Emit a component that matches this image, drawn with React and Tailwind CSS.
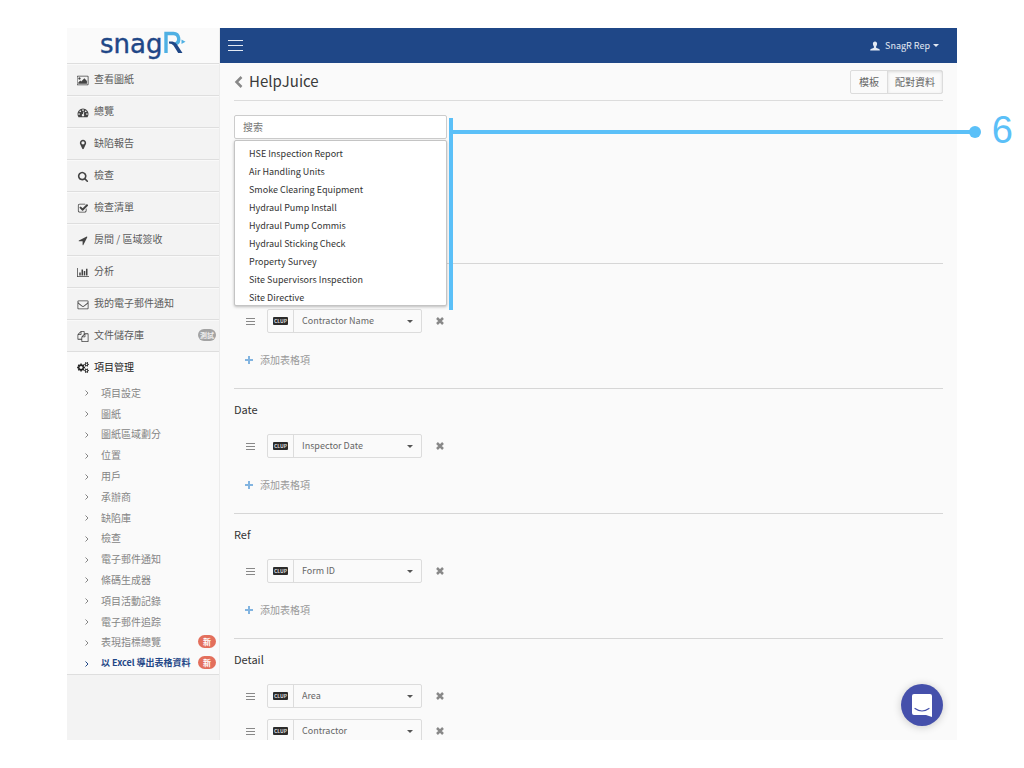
import { useState } from "react";

const ICONS = {
  picture: {
    box: "0 0 1920 1792",
    d: "M576 576q0 80-56 136t-136 56-136-56-56-136 56-136 136-56 136 56 56 136zm1024 384v448h-1408v-192l320-320 160 160 512-512zm96-704h-1600q-13 0-22.5 9.5t-9.5 22.5v1216q0 13 9.5 22.5t22.5 9.5h1600q13 0 22.5-9.5t9.5-22.5v-1216q0-13-9.5-22.5t-22.5-9.5zm160 32v1216q0 66-47 113t-113 47h-1600q-66 0-113-47t-47-113v-1216q0-66 47-113t113-47h1600q66 0 113 47t47 113z",
  },
  gauge: {
    box: "0 0 1792 1792",
    d: "M384 1152q0-53-37.5-90.5t-90.5-37.5-90.5 37.5-37.5 90.5 37.5 90.5 90.5 37.5 90.5-37.5 37.5-90.5zm192-448q0-53-37.5-90.5t-90.5-37.5-90.5 37.5-37.5 90.5 37.5 90.5 90.5 37.5 90.5-37.5 37.5-90.5zm428 481l101-382q6-26-7.5-48.5t-38.5-29.5-48 6.5-30 39.5l-101 382q-60 5-107 43.5t-63 98.5q-20 77 20 146t117 89 146-20 89-117q16-60-6-117t-72-91zm660-33q0-53-37.5-90.5t-90.5-37.5-90.5 37.5-37.5 90.5 37.5 90.5 90.5 37.5 90.5-37.5 37.5-90.5zm-640-640q0-53-37.5-90.5t-90.5-37.5-90.5 37.5-37.5 90.5 37.5 90.5 90.5 37.5 90.5-37.5 37.5-90.5zm448 192q0-53-37.5-90.5t-90.5-37.5-90.5 37.5-37.5 90.5 37.5 90.5 90.5 37.5 90.5-37.5 37.5-90.5zm320 448q0 261-141 483-19 29-54 29h-1402q-35 0-54-29-141-221-141-483 0-182 71-348t191-286 286-191 348-71 348 71 286 191 191 286 71 348z",
  },
  marker: {
    box: "0 0 1792 1792",
    d: "M1152 640q0-106-75-181t-181-75-181 75-75 181 75 181 181 75 181-75 75-181zm256 0q0 109-33 179l-364 774q-16 33-47.5 52t-67.5 19-67.5-19-46.5-52l-365-774q-33-70-33-179 0-212 150-362t362-150 362 150 150 362z",
  },
  search: {
    box: "0 0 1792 1792",
    d: "M1216 832q0-185-131.5-316.5t-316.5-131.5-316.5 131.5-131.5 316.5 131.5 316.5 316.5 131.5 316.5-131.5 131.5-316.5zm512 832q0 52-38 90t-90 38q-54 0-90-38l-343-342q-179 124-399 124-143 0-273.5-55.5t-225-150-150-225-55.5-273.5 55.5-273.5 150-225 225-150 273.5-55.5 273.5 55.5 225 150 150 225 55.5 273.5q0 220-124 399l343 343q37 37 37 90z",
  },
  checkSquare: {
    box: "0 0 1792 1792",
    d: "M1472 930v318q0 119-84.5 203.5t-203.5 84.5h-832q-119 0-203.5-84.5t-84.5-203.5v-832q0-119 84.5-203.5t203.5-84.5h832q63 0 117 25 15 7 18 23 3 17-9 29l-49 49q-10 10-23 10-3 0-9-2-23-6-45-6h-832q-66 0-113 47t-47 113v832q0 66 47 113t113 47h832q66 0 113-47t47-113v-254q0-13 9-22l64-64q10-10 23-10 6 0 12 3 20 8 20 29zm231-489l-814 814q-24 24-57 24t-57-24l-430-430q-24-24-24-57t24-57l110-110q24-24 57-24t57 24l263 263 647-647q24-24 57-24t57 24l110 110q24 24 24 57t-24 57z",
  },
  arrow: {
    box: "0 0 1792 1792",
    d: "M1593 349l-640 1280q-17 35-57 35-5 0-15-2-22-5-35.5-22.5t-13.5-39.5v-576h-576q-22 0-39.5-13.5t-22.5-35.5 4-42 29-30l1280-640q13-7 29-7 27 0 45 19 15 14 18.5 34.5t-6.5 39.5z",
  },
  chart: {
    box: "0 0 2048 1792",
    d: "M640 896v512h-256v-512h256zm384-512v1024h-256v-1024h256zm1024 1152v128h-2048v-1536h128v1408h1920zm-640-896v768h-256v-768h256zm384-384v1152h-256v-1152h256z",
  },
  envelope: {
    box: "0 0 1792 1792",
    d: "M1664 1504v-768q-32 36-69 66-268 206-426 338-51 43-83 67t-86.5 48.5-102.5 24.5h-2q-48 0-102.5-24.5t-86.5-48.5-83-67q-158-132-426-338-37-30-69-66v768q0 13 9.5 22.5t22.5 9.5h1472q13 0 22.5-9.5t9.5-22.5zm0-1051v-24.5l-.5-13-3-12.5-5.5-9-9-7.5-14-2.5h-1472q-13 0-22.5 9.5t-9.5 22.5q0 168 147 284 193 152 401 317 6 5 35 29.5t46 37.5 44.5 31.5 50.5 27.5 43 9h2q20 0 43-9t50.5-27.5 44.5-31.5 46-37.5 35-29.5q208-165 401-317 54-43 100.5-115.5t46.5-131.5zm128-37v1088q0 66-47 113t-113 47h-1472q-66 0-113-47t-47-113v-1088q0-66 47-113t113-47h1472q66 0 113 47t47 113z",
  },
  files: {
    box: "0 0 1792 1792",
    d: "M1696 384q40 0 68 28t28 68v1216q0 40-28 68t-68 28h-960q-40 0-68-28t-28-68v-288h-544q-40 0-68-28t-28-68v-672q0-40 20-88t48-76l408-408q28-28 76-48t88-20h416q40 0 68 28t28 68v328q68-40 128-40h416zm-544 213l-299 299h299v-299zm-640-384l-299 299h299v-299zm196 647l316-316v-416h-384v416q0 40-28 68t-68 28h-416v640h512v-256q0-40 20-88t48-76zm956 804v-1152h-384v416q0 40-28 68t-68 28h-416v640h896z",
  },
  cogs: {
    box: "0 0 1920 1792",
    d: "M896 896q0-106-75-181t-181-75-181 75-75 181 75 181 181 75 181-75 75-181zm768 512q0-52-38-90t-90-38-90 38-38 90q0 53 37.5 90.5t90.5 37.5 90.5-37.5 37.5-90.5zm0-1024q0-52-38-90t-90-38-90 38-38 90q0 53 37.5 90.5t90.5 37.5 90.5-37.5 37.5-90.5zm-384 421v185q0 10-7 19.5t-16 10.5l-155 24q-11 35-32 76 34 48 90 115 7 11 7 20 0 12-7 19-23 30-82.5 89.5t-78.5 59.5q-11 0-21-7l-115-90q-37 19-77 31-11 108-23 155-7 24-30 24h-186q-11 0-20-7.5t-10-17.5l-23-153q-34-10-75-31l-118 89q-7 7-20 7-11 0-21-8-144-133-144-160 0-9 7-19 10-14 41-53t47-61q-23-44-35-82l-152-24q-10-1-17-9.5t-7-19.5v-185q0-10 7-19.5t16-10.5l155-24q11-35 32-76-34-48-90-115-7-11-7-20 0-12 7-20 22-30 82-89t79-59q11 0 21 7l115 90q34-18 77-32 11-108 23-154 7-24 30-24h186q11 0 20 7.5t10 17.5l23 153q34 10 75 31l118-89q8-7 20-7 11 0 21 8 144 133 144 160 0 8-7 19-12 16-42 54t-45 60q23 48 34 82l152 23q10 2 17 10.5t7 19.5zm640 533v140q0 16-149 31-12 27-30 52 51 113 51 138 0 4-4 7-122 71-124 71-8 0-46-47t-52-68q-20 2-30 2t-30-2q-14 21-52 68t-46 47q-2 0-124-71-4-3-4-7 0-25 51-138-18-25-30-52-149-15-149-31v-140q0-16 149-31 13-29 30-52-51-113-51-138 0-4 4-7 4-2 35-20t59-34 30-16q8 0 46 46.5t52 67.5q20-2 30-2t30 2q51-71 92-112l6-2q4 0 124 70 4 3 4 7 0 25-51 138 17 23 30 52 149 15 149 31zm0-1024v140q0 16-149 31-12 27-30 52 51 113 51 138 0 4-4 7-122 71-124 71-8 0-46-47t-52-68q-20 2-30 2t-30-2q-14 21-52 68t-46 47q-2 0-124-71-4-3-4-7 0-25 51-138-18-25-30-52-149-15-149-31v-140q0-16 149-31 13-29 30-52-51-113-51-138 0-4 4-7 4-2 35-20t59-34 30-16q8 0 46 46.5t52 67.5q20-2 30-2t30 2q51-71 92-112l6-2q4 0 124 70 4 3 4 7 0 25-51 138 17 23 30 52 149 15 149 31z",
  },
  user: {
    box: "0 0 20 20",
    d: "M10 1c-2.600 0-4.200 1.900-4.200 4.600 0 1.900.7 3.800 1.900 5v2.200c0 .6-.3 1-1 1.300L1.800 16.200C.8 16.700.4 17.400.4 18.500V19h19.200v-.5c0-1.100-.4-1.800-1.400-2.300l-4.900-2.100c-.7-.3-1-.7-1-1.300v-2.200c1.200-1.200 1.900-3.100 1.900-5C14.200 2.900 12.600 1 10 1z",
  },
};

const MENU = [
  { icon: "picture", label: "查看圖紙" },
  { icon: "gauge", label: "總覽" },
  { icon: "marker", label: "缺陷報告" },
  { icon: "search", label: "檢查" },
  { icon: "checkSquare", label: "檢查清單" },
  { icon: "arrow", label: "房間 / 區域簽收" },
  { icon: "chart", label: "分析" },
  { icon: "envelope", label: "我的電子郵件通知" },
  { icon: "files", label: "文件儲存庫", badge: "測試" },
];

const SUBMENU = [
  { label: "項目設定" },
  { label: "圖紙" },
  { label: "圖紙區域劃分" },
  { label: "位置" },
  { label: "用戶" },
  { label: "承辦商" },
  { label: "缺陷庫" },
  { label: "檢查" },
  { label: "電子郵件通知" },
  { label: "條碼生成器" },
  { label: "項目活動記錄" },
  { label: "電子郵件追踪" },
  { label: "表現指標總覽", badge: "新" },
  { label: "以 Excel 導出表格資料", badge: "新", active: true },
];

const FORMS = [
  "HSE Inspection Report",
  "Air Handling Units",
  "Smoke Clearing Equipment",
  "Hydraul Pump Install",
  "Hydraul Pump Commis",
  "Hydraul Sticking Check",
  "Property Survey",
  "Site Supervisors Inspection",
  "Site Directive",
];

const SECTIONS = [
  { title: "", fields: ["Contractor Name"] },
  { title: "Date", fields: ["Inspector Date"] },
  { title: "Ref", fields: ["Form ID"] },
  { title: "Detail", fields: ["Area", "Contractor"] },
];

const Icon = ({ name, className }) => (
  <svg viewBox={ICONS[name].box} fill="currentColor" className={className} aria-hidden="true">
    <path d={ICONS[name].d} />
  </svg>
);

const Logo = () => (
  <a href="#home" aria-label="snagR" className="flex h-[35px] items-center justify-center">
    <svg viewBox="0 0 86 30" className="h-[30px] w-[86px]" aria-hidden="true">
      <text x="0" y="22" fontSize="26" fill="#1f4787" stroke="#1f4787" strokeWidth="0.4" className="font-['DejaVu_Sans']">
        snag
      </text>
      <path d="M66 22V2.500h7.500a5.500 5.500 0 0 1 2 10.500" fill="none" stroke="#4fb0e3" strokeWidth="3.400" />
      <path d="M69 10.500h3.500q3 .5 4.500 3l5.500 8.500h-4.300l-4.700-7.500q-1.500-2-4.500-2z" fill="#1f4787" />
      <path d="M81.500 8.500l4 2.300-4 2.300z" fill="#4fb0e3" />
    </svg>
  </a>
);

const Sidebar = () => (
  <nav className="w-[153px] shrink-0 overflow-hidden border-r border-[#ececec] bg-[#f3f3f3] text-[10px] text-[#5c5c5c]">
    <div className="bg-[#fafafa]">
      <Logo />
    </div>
    <ul>
      {MENU.map((item) => (
        <li key={item.label} className="border-t border-[#dedede]">
          <a href="#menu" className="flex h-[31px] items-center border-t border-[#f9f9f9] pr-[3px] pl-[10px]">
            <Icon name={item.icon} className="h-[11px] w-[12px] text-[#444]" />
            <span className="ml-[5px] pb-[3px]">{item.label}</span>
            {item.badge && (
              <span className="mb-[2px] ml-auto flex h-[12px] w-[18px] items-center justify-center rounded-full bg-[#a3a3a3] text-[7px] font-bold text-[#eee]">
                {item.badge}
              </span>
            )}
          </a>
        </li>
      ))}
    </ul>
    <div className="border-y border-[#dedede] bg-[#fafafa]">
      <a href="#project" className="flex h-[31px] items-center pl-[10px] text-[#222]">
        <Icon name="cogs" className="h-[11px] w-[12px]" />
        <span className="ml-[5px] pb-[2px]">項目管理</span>
      </a>
      <ul className="grid h-[291px] auto-rows-fr">
        {SUBMENU.map((item) => (
          <li key={item.label}>
            <a
              href="#sub"
              className={
                item.active
                  ? "flex h-full items-center pr-[3px] pl-[17px] text-[9px] font-bold whitespace-nowrap text-[#1f4787]"
                  : "flex h-full items-center pr-[3px] pl-[17px] whitespace-nowrap text-[#858585]"
              }
            >
              <svg viewBox="0 0 6 8" className="h-[8px] w-[6px]" fill="none" stroke="currentColor" aria-hidden="true">
                <path d="M1.500 1.500L4 4 1.500 6.500" />
              </svg>
              <span className="ml-[11px] pb-[2px]">{item.label}</span>
              {item.badge && (
                <span className="mb-[2px] ml-auto flex h-[13px] w-[18px] shrink-0 items-center justify-center rounded-full bg-[#e36f5c] text-[8px] font-bold text-white">
                  {item.badge}
                </span>
              )}
            </a>
          </li>
        ))}
      </ul>
    </div>
  </nav>
);

const TopBar = () => (
  <header className="flex h-[35px] shrink-0 items-center justify-between bg-[#1f4787] pr-[18px] pl-[8px] text-[#e4eaf3]">
    <button type="button" aria-label="Menu" className="flex w-[15px] flex-col gap-[4px]">
      <span className="h-px w-full bg-current" />
      <span className="h-px w-full bg-current" />
      <span className="h-px w-full bg-current" />
    </button>
    <button type="button" className="flex items-center text-[9px]">
      <Icon name="user" className="mr-[5px] h-[10px] w-[10px]" />
      SnagR Rep
      <span className="ml-[3px] border-x-[3px] border-t-[3px] border-x-transparent" />
    </button>
  </header>
);

const TitleBar = () => (
  <div className="flex h-[38px] items-center justify-between border-b border-[#dcdcdc]">
    <h1 className="flex items-center text-[15px] text-[#3a3a3a]">
      <a href="#back" aria-label="Back" className="mr-[6px] text-[#888]">
        <svg viewBox="0 0 9 12" className="h-[12px] w-[9px]" fill="none" stroke="currentColor" strokeWidth="2.500">
          <path d="M7.500 1L2.500 6l5 5" />
        </svg>
      </a>
      HelpJuice
    </h1>
    <div className="flex h-[24px] rounded-[2px] border border-[#dcdcdc] text-[10px] text-[#666]">
      <button type="button" className="px-[8px]">
        模板
      </button>
      <button type="button" className="border-l border-[#dcdcdc] px-[7px] shadow-[inset_0_1px_3px_rgba(0,0,0,0.12)]">
        配對資料
      </button>
    </div>
  </div>
);

const FieldRow = ({ name }) => (
  <div className="flex h-[24px] items-center">
    <button type="button" aria-label="Reorder" className="ml-[12px] flex w-[9px] flex-col gap-[2px]">
      <span className="h-px w-full bg-[#888]" />
      <span className="h-px w-full bg-[#888]" />
      <span className="h-px w-full bg-[#888]" />
    </button>
    <div className="relative ml-[12px] flex h-full w-[155px] items-center rounded-[2px] border border-[#dcdcdc]">
      <span className="flex h-full w-[26px] items-center justify-center border-r border-[#dcdcdc]">
        <span className="flex h-[8px] w-[15px] items-center justify-center rounded-[1px] bg-[#2b2b2b] text-[5px] font-bold text-[#ddd]">
          CLUP
        </span>
      </span>
      <select aria-label="Field" defaultValue={name} className="h-full flex-1 appearance-none pl-[8px] text-[9px] text-[#666]">
        <option>{name}</option>
      </select>
      <span className="pointer-events-none absolute right-[8px] border-x-[3px] border-t-[3px] border-x-transparent border-t-[#555]" />
    </div>
    <button type="button" aria-label="Remove" className="ml-[14px] text-[#888]">
      <svg viewBox="0 0 8 8" className="h-[8px] w-[8px]" stroke="currentColor" strokeWidth="2.500">
        <path d="M1 1l6 6M7 1L1 7" />
      </svg>
    </button>
  </div>
);

const Section = ({ title, fields }) => (
  <section className="border-t border-[#d6d6d6] pt-[10px] pb-[18px]">
    <h2 className="mb-[15px] h-[20px] text-[11px] leading-[20px] text-[#333]">{title}</h2>
    <div className="flex flex-col gap-[11px]">
      {fields.map((field) => (
        <FieldRow key={field} name={field} />
      ))}
    </div>
    <button type="button" className="mt-[17px] ml-[11px] flex h-[20px] items-center text-[10px] text-[#999]">
      <svg viewBox="0 0 8 8" className="mr-[7px] h-[8px] w-[8px]" stroke="#82b4e0" strokeWidth="2">
        <path d="M4 0v8M0 4h8" />
      </svg>
      <span className="pb-[2px]">添加表格項</span>
    </button>
  </section>
);

const FormSearch = () => {
  const [query, setQuery] = useState("");
  const matches = FORMS.filter((form) => form.toLowerCase().includes(query.toLowerCase()));

  return (
    <div className="relative w-[213px]">
      <input
        type="text"
        aria-label="搜索"
        placeholder="搜索"
        value={query}
        onChange={(e) => setQuery(e.target.value)}
        className="block h-[24px] w-full rounded-[2px] border border-[#ccc] bg-white px-[8px] pb-[2px] text-[10px] text-[#555] outline-none placeholder:text-[#777]"
      />
      <ul className="absolute top-full left-0 z-10 mt-px max-h-[166px] w-full overflow-hidden rounded-[2px] border border-[#c4c4c4] bg-white pt-[4px] text-[9px] text-[#333] shadow-[0_1px_3px_rgba(0,0,0,0.25)]">
        {matches.map((form) => (
          <li key={form}>
            <button type="button" className="block h-[18px] w-full px-[14px] text-left">
              {form}
            </button>
          </li>
        ))}
      </ul>
    </div>
  );
};

// Numbered callout pointing at the open search list
const Callout = () => (
  <div className="pointer-events-none absolute top-[90px] right-[-56px] left-[382px] z-20 h-[192px] border-l-4 border-[#5bc0f8]">
    <div className="flex h-[28px] items-center">
      <span className="h-[4px] flex-1 bg-[#5bc0f8]" />
      <span className="-ml-[6px] h-[12px] w-[12px] rounded-full bg-[#5bc0f8]" />
      <span className="ml-[11px] pb-[5px] font-['Liberation_Sans',sans-serif] text-[38px] leading-none text-[#5bc0f8]">
        6
      </span>
    </div>
  </div>
);

const ChatButton = () => (
  <button
    type="button"
    aria-label="Chat"
    className="absolute right-[14px] bottom-[14px] flex h-[42px] w-[42px] items-center justify-center rounded-full bg-[#4550ab] shadow-[0_1px_8px_rgba(0,0,0,0.2)]"
  >
    <svg viewBox="0 0 20 23" className="h-[23px] w-[20px]" aria-hidden="true">
      <path d="M2 0h16q2 0 2 2v21l-6-2H2q-2 0-2-2V2q0-2 2-2z" fill="#fff" />
      <path d="M3 14.500q7 5 14 0" fill="none" stroke="#4550ab" strokeWidth="1.200" strokeLinecap="round" />
    </svg>
  </button>
);

const App = () => (
  <div className="h-screen bg-white px-[67px] py-[28px] font-['Noto_Sans_CJK_TC',sans-serif]">
    <div className="relative flex h-full bg-[#fafafa]">
      <Sidebar />
      <div className="flex min-w-0 flex-1 flex-col">
        <TopBar />
        <main className="min-h-0 flex-1 overflow-y-auto px-[14px] [scrollbar-width:none]">
          <TitleBar />
          <div className="h-[162px] pt-[14px]">
            <FormSearch />
          </div>
          {SECTIONS.map((section) => (
            <Section key={section.fields[0]} title={section.title} fields={section.fields} />
          ))}
        </main>
      </div>
      <Callout />
      <ChatButton />
    </div>
  </div>
);

export default App;
